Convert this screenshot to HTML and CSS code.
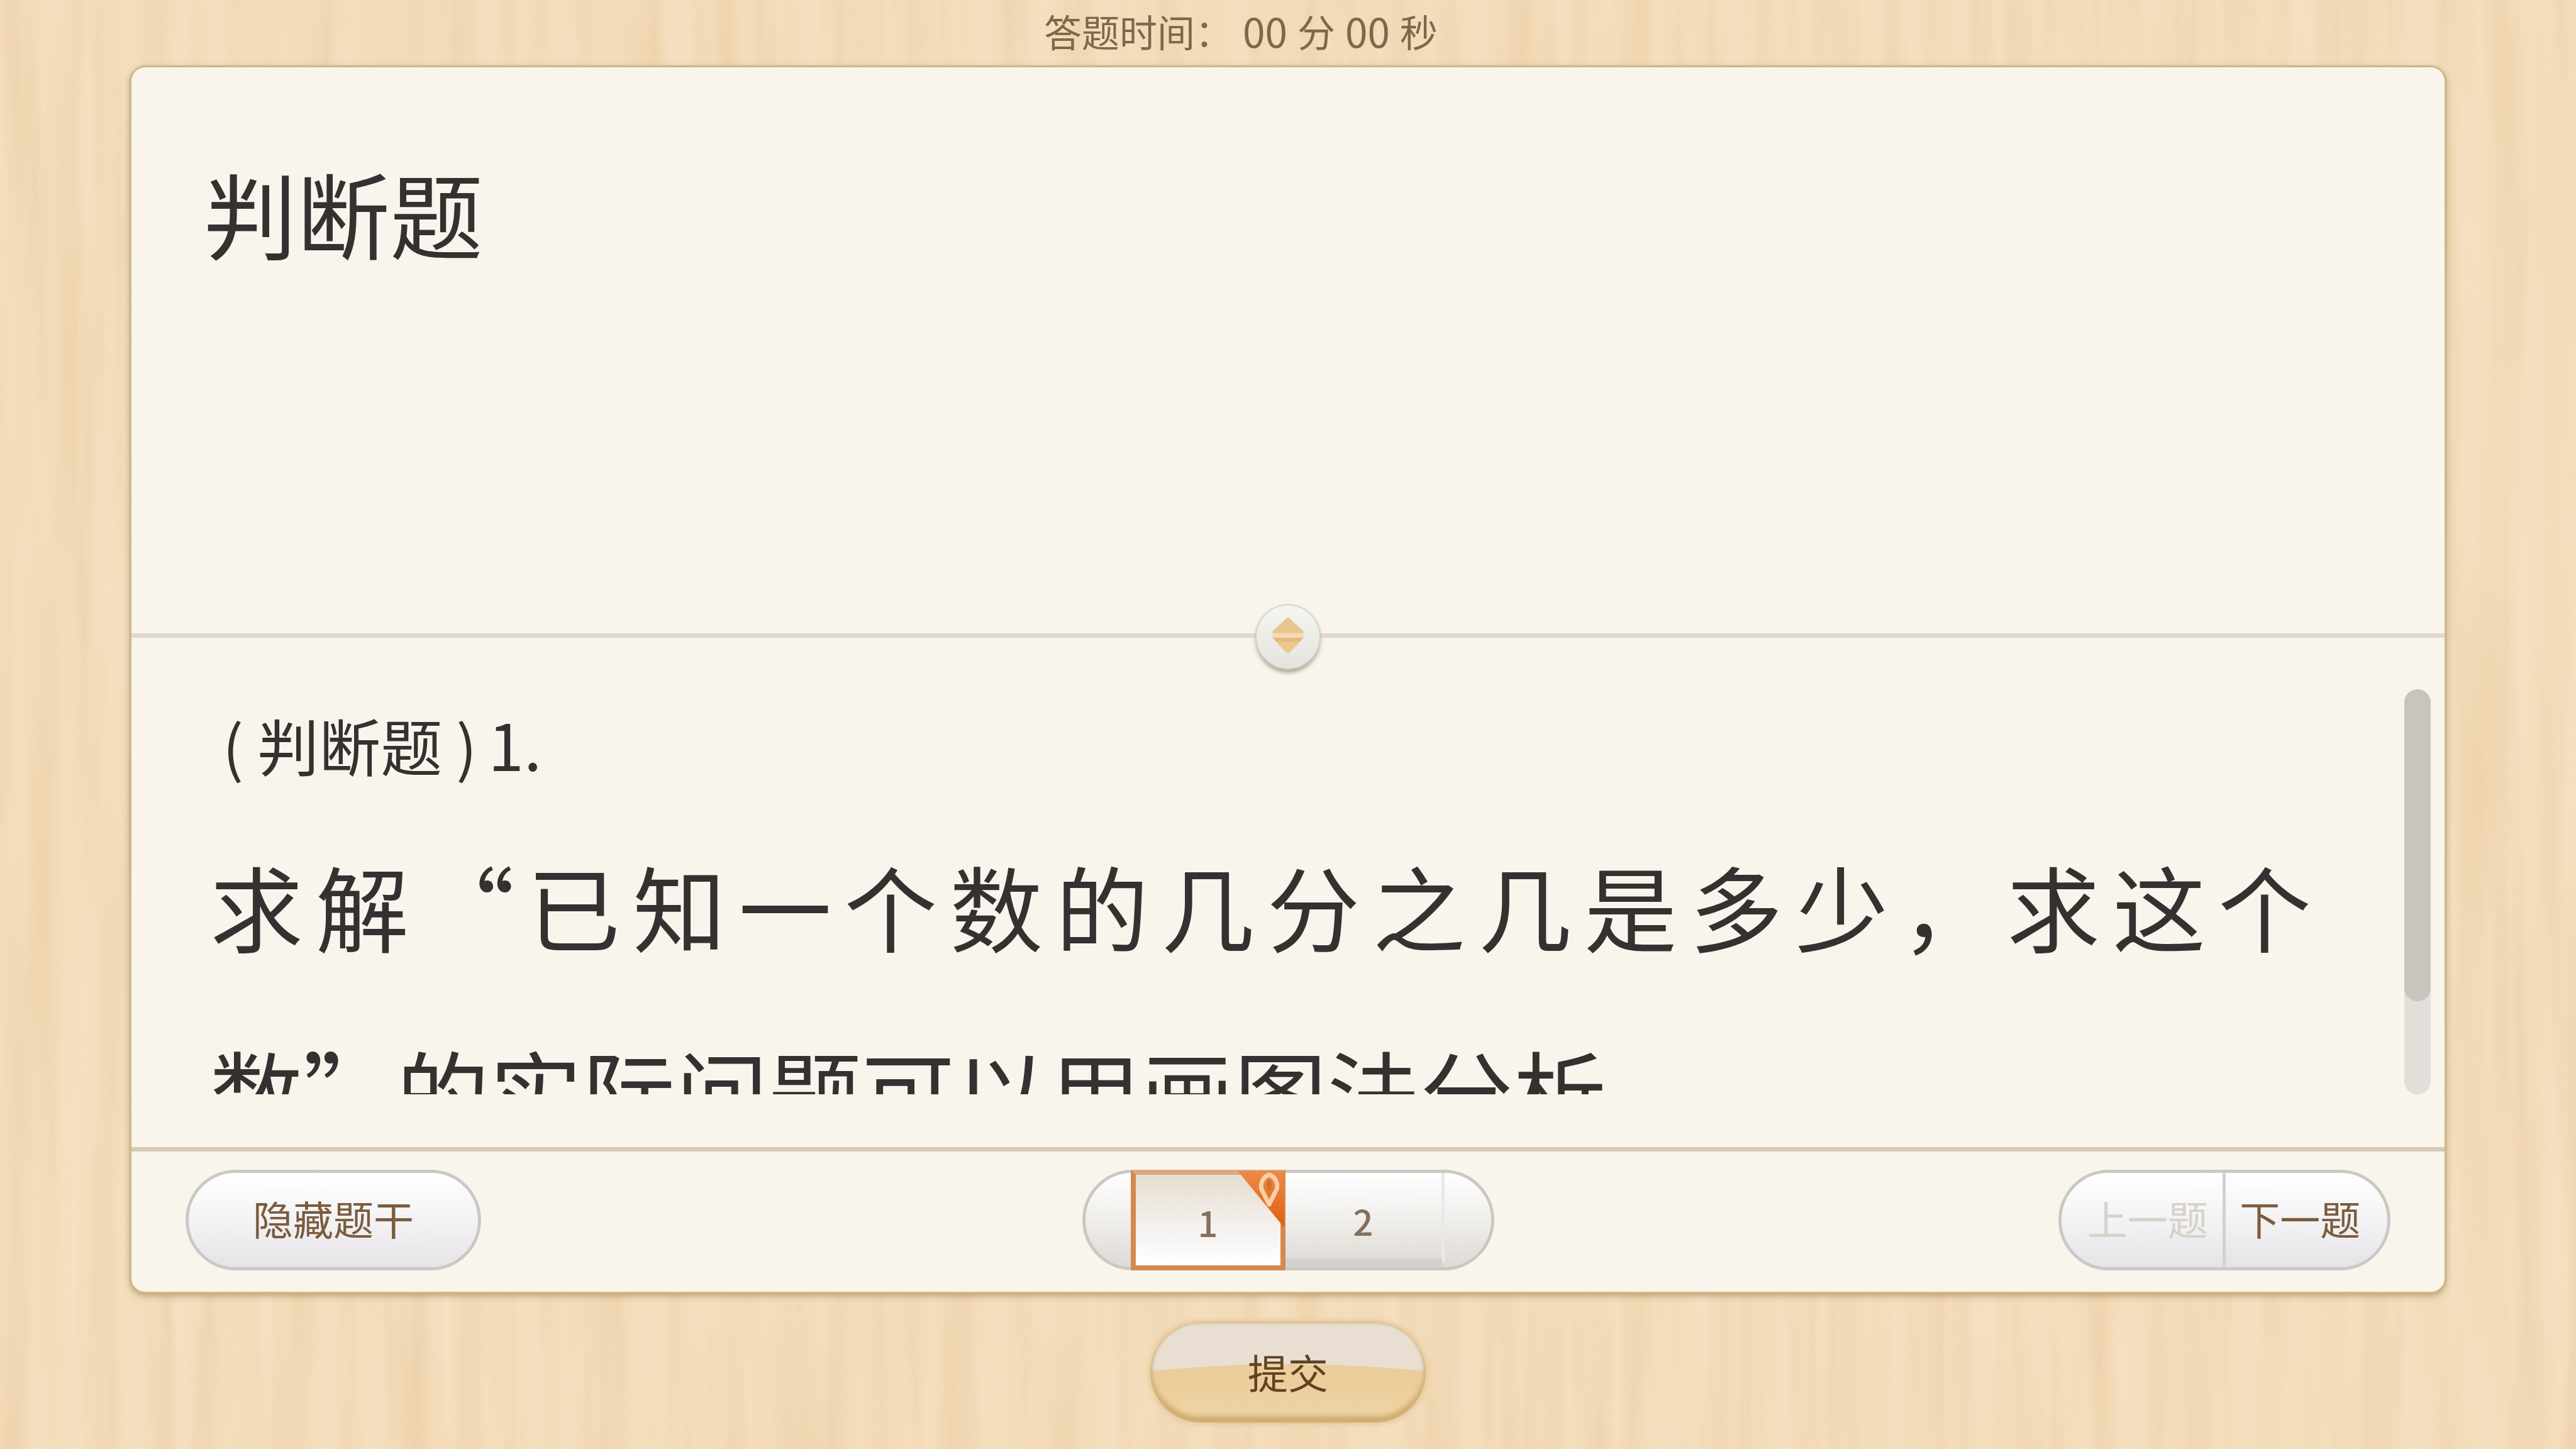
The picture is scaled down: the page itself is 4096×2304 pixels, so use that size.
FILE: index.html
```html
<!DOCTYPE html>
<html lang="zh-CN">
  <head>
    <meta charset="UTF-8" />
    <meta name="viewport" content="width=device-width, initial-scale=1.0" />
    <title>判断题</title>
    <link rel="stylesheet" href="styles.css">
  </head>
  <body>
    <!-- wood grain behind the whole page -->
    <svg class="wood" width="100%" height="100%" aria-hidden="true">
      <defs>
        <filter id="grainDark" x="0" y="0" width="100%" height="100%" color-interpolation-filters="sRGB">
          <feTurbulence type="fractalNoise" baseFrequency="0.016 0.001" numOctaves="4" seed="7" />
          <feColorMatrix values="0 0 0 0 0.91  0 0 0 0 0.80  0 0 0 0 0.63  2 0 0 0 -0.75" />
        </filter>
        <filter id="grainLight" x="0" y="0" width="100%" height="100%" color-interpolation-filters="sRGB">
          <feTurbulence type="fractalNoise" baseFrequency="0.022 0.0014" numOctaves="3" seed="21" />
          <feColorMatrix values="0 0 0 0 0.98  0 0 0 0 0.89  0 0 0 0 0.79  2 0 0 0 -0.75" />
        </filter>
      </defs>
      <rect width="100%" height="100%" filter="url(#grainDark)" />
      <rect width="100%" height="100%" filter="url(#grainLight)" />
    </svg>

    <header class="timer">
      <span>答题时间：</span>
      <span class="digits">00</span>
      <span>分</span>
      <span class="digits">00</span>
      <span>秒</span>
    </header>

    <main class="card">
      <section class="stem">
        <h1>判断题</h1>
      </section>

      <div class="divider">
        <button class="knob" type="button" aria-label="拖动">
          <svg viewBox="0 0 48 54" width="52" height="58">
            <path d="M24 0 L46 20 Q49 24 44 25 L4 25 Q-1 24 2 20 Z" fill="#e9c68c" />
            <path d="M1 24 H47 V31 H1 Z" fill="#f7d8b4" />
            <path d="M1 31 H47 L27 52 Q24 55 21 52 Z" fill="#ecc787" />
            <path d="M2 31 H46 L42 36 H6 Z" fill="#e5b87c" />
          </svg>
        </button>
      </div>

      <section class="question">
        <div class="viewport">
          <p class="label">(<span class="kind">判断题</span>)<span class="number">1.</span></p>
          <p class="text">
            <span class="line spread">求解“已知一个数的几分之几是多少，求这个</span>
            <span class="line">数”的实际问题可以用画图法分析</span>
          </p>
        </div>
        <div class="scrollbar">
          <div class="thumb"></div>
        </div>
      </section>

      <footer class="toolbar">
        <button class="pill hide-btn" type="button">隐藏题干</button>

        <nav class="pager">
          <button class="page current" type="button">1
            <svg class="corner" viewBox="0 0 74 90" width="74" height="90" aria-hidden="true">
              <defs>
                <linearGradient id="flag" x1="0" y1="0" x2="0" y2="1">
                  <stop offset="0" stop-color="#ec8a48" />
                  <stop offset="1" stop-color="#df5f0c" />
                </linearGradient>
              </defs>
              <path d="M0 0 H74 V90 Z" fill="url(#flag)" />
              <path d="M50 6 C42 8 35 18 38 29 L50 53 L62 29 C65 18 58 8 50 6 Z" fill="none" stroke="#fbcfa8" stroke-width="7" stroke-linejoin="round" />
              <ellipse cx="50" cy="22" rx="4" ry="9" fill="#c9762f" />
            </svg>
          </button>
          <button class="page" type="button">2</button>
        </nav>

        <div class="pill steps">
          <button class="prev" type="button" disabled>上一题</button>
          <button class="next" type="button">下一题</button>
        </div>
      </footer>
    </main>

    <div class="actions">
      <button class="submit" type="button">
        <svg class="gloss" viewBox="0 0 438 160" preserveAspectRatio="none" aria-hidden="true">
          <path d="M0 0 H438 V78 Q219 56 0 78 Z" fill="#e8dfd2" />
        </svg>
        <span>提交</span>
      </button>
    </div>
  </body>
</html>
```
FILE: styles.css
```css
* {
  box-sizing: border-box;
}

body {
  margin: 0;
  min-height: 100vh;
  display: flex;
  flex-direction: column;
  position: relative;
  background-color: #f3dcba;
  color: #333230;
  font-family: "Noto Sans CJK SC", "Noto Sans", sans-serif;
}

button {
  margin: 0;
  padding: 0;
  border: none;
  background: none;
  color: inherit;
  font-family: inherit;
  cursor: pointer;
}

h1,
p {
  margin: 0;
  font-weight: normal;
}

.wood {
  position: absolute;
  inset: 0;
  z-index: -1;
  opacity: 0.6;
}

/* timer */
.timer {
  height: 107px;
  padding: 0 150px 10px 0;
  display: flex;
  justify-content: center;
  align-items: center;
  gap: 16px;
  color: #80674a;
  font-size: 60px;
  line-height: 97px;
}

.timer .digits {
  font-size: 64px;
}

/* card */
.card {
  flex: 1;
  margin: 0 209px;
  display: flex;
  flex-direction: column;
  background-color: #f9f5ed;
  border-radius: 22px;
  box-shadow: 0 0 0 3px #cdb68c, 0 4px 10px 3px rgba(140, 110, 60, 0.5),
    inset 0 0 24px #fbf4e2;
}

.stem {
  flex: 1;
  padding: 150px 115px 0;
}

.stem h1 {
  font-size: 148px;
  line-height: 160px;
}

.divider {
  height: 7px;
  position: relative;
  background-color: #dfd8cc;
}

.knob {
  position: absolute;
  top: 50%;
  left: 50%;
  width: 100px;
  height: 100px;
  margin: -48px 0 0 -50px;
  display: flex;
  justify-content: center;
  align-items: center;
  padding-bottom: 6px;
  border-radius: 50%;
  background: linear-gradient(#f6f6f1, #e4e3de);
  box-shadow: 0 0 3px 2px #d0cec4, 0 6px 7px rgba(110, 110, 85, 0.65);
}

/* question */
.question {
  display: flex;
  justify-content: space-between;
  padding: 82px 22px 84px 125px;
}

.viewport {
  flex: 1;
  height: 644px;
  margin-right: 148px;
  overflow: hidden;
}

.label {
  height: 196px;
  padding-left: 20px;
  font-size: 98px;
  line-height: 172px;
}

.kind {
  margin: 0 22px;
}

.number {
  margin-left: 18px;
  font-size: 102px;
}

.text {
  font-size: 148px;
  line-height: 294px;
}

.line {
  display: block;
  white-space: nowrap;
}

.spread {
  text-align: justify;
  text-align-last: justify;
}

.scrollbar {
  width: 42px;
  border-radius: 21px;
  background-color: #e2dfda;
}

.thumb {
  height: 77%;
  border-radius: 21px;
  background-color: #c9c4be;
}

/* toolbar */
.toolbar {
  display: grid;
  grid-template-columns: 1fr auto 1fr;
  align-items: center;
  padding: 29px 86px 34px;
  border-top: 7px solid #d5c9b8;
}

.pill {
  height: 160px;
  border: 5px solid #cbc8c4;
  border-radius: 80px;
  background: linear-gradient(#ffffff, #f3f2f4 50%, #e5e3e5);
  color: #7b5c3c;
  font-size: 64px;
}

.hide-btn {
  justify-self: start;
  width: 470px;
  padding-bottom: 8px;
}

.pager {
  height: 160px;
  display: flex;
  padding: 0 74px 0 72px;
  border: 5px solid #cbc8c4;
  border-radius: 80px;
  background: linear-gradient(#ffffff, #f0eeeb 50%, #dedad4);
}

.page {
  width: 253px;
  padding-top: 14px;
  border-right: 5px solid #ebe9e7;
  border-bottom: 14px solid #d2d2d1;
  color: #86705a;
  font-size: 56px;
  font-weight: 500;
}

.page.current {
  position: relative;
  width: 246px;
  margin: -5px 0;
  padding-top: 4px;
  border: 8px solid #d4894f;
  border-top-color: #dba87c;
  background: linear-gradient(#e6ddd0, #f4f2f0 60%, #ffffff);
}

.corner {
  position: absolute;
  top: -6px;
  right: -6px;
}

.steps {
  justify-self: end;
  width: 528px;
  display: flex;
}

.steps button {
  flex: 1;
  padding-bottom: 8px;
  font-size: 64px;
}

.steps .prev {
  padding-left: 18px;
  border-right: 5px solid #d3d1cf;
  color: #d6d2ca;
}

.steps .next {
  padding-right: 20px;
}

/* submit */
.actions {
  height: 250px;
  padding-top: 48px;
  display: flex;
  justify-content: center;
}

.submit {
  position: relative;
  width: 438px;
  height: 160px;
  padding-bottom: 4px;
  overflow: hidden;
  border-radius: 80px;
  background: linear-gradient(#ecd0a0, #ebcd9a 60%, #eed6a8);
  box-shadow: 0 0 8px 2px #e3c590;
  color: #5f4322;
  font-size: 64px;
}

.submit::after {
  content: "";
  position: absolute;
  inset: 0;
  border-radius: 80px;
  box-shadow: inset 0 0 4px 2px #d3b682, inset 0 -10px 8px #cfa968;
}

.submit span {
  position: relative;
}

.gloss {
  position: absolute;
  inset: 0;
  width: 100%;
  height: 100%;
}
```
